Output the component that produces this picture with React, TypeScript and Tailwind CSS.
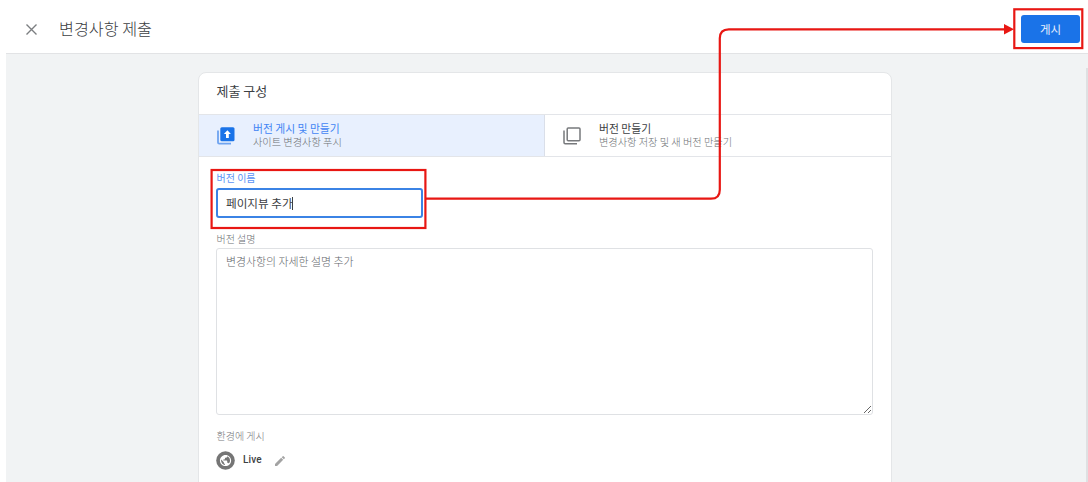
import { useState } from 'react';

const tabs = [
    {
        id: 'publish',
        title: '버전 게시 및 만들기',
        description: '사이트 변경사항 푸시',
    },
    {
        id: 'version',
        title: '버전 만들기',
        description: '변경사항 저장 및 새 버전 만들기',
    },
];

function CloseIcon() {
    return (
        <svg
            width="11"
            height="11"
            viewBox="0 0 11 11"
            fill="none"
            stroke="#7b7e81"
            strokeWidth="1.4"
        >
            <path d="M0.5 0.5l10 10M10.5 0.5L0.5 10.5" />
        </svg>
    );
}

function PublishIcon() {
    return (
        <svg width="18" height="18" viewBox="0 0 18 18">
            <path
                d="M1 3.5v12a1.2 1.2 0 0 0 1.2 1.2H14"
                fill="none"
                stroke="#6ea3f0"
                strokeWidth="1.8"
            />
            <rect x="3.3" y="0.3" width="14.2" height="14" rx="1.5" fill="#1a73e8" />
            <path d="M10.4 3.2L6.9 7.1h2.1v3.8h2.8V7.1h2.1z" fill="#fff" />
        </svg>
    );
}

function VersionIcon() {
    return (
        <svg
            width="18"
            height="18"
            viewBox="0 0 18 18"
            fill="none"
            stroke="#77797c"
            strokeWidth="1.5"
        >
            <path d="M1 3.5v12a1.2 1.2 0 0 0 1.2 1.2H14" />
            <rect x="4.2" y="1" width="12.8" height="12.8" rx="1" />
        </svg>
    );
}

function GlobeIcon() {
    return (
        <svg width="19" height="19" viewBox="0 0 19 19">
            <circle cx="9.5" cy="9.5" r="9.3" fill="#757575" />
            <g transform="translate(2.8 2.8) scale(0.56)">
                <path
                    fill="#fff"
                    d="M12 2C6.48 2 2 6.48 2 12s4.48 10 10 10 10-4.48 10-10S17.52 2 12 2zm-1 17.93c-3.95-.49-7-3.85-7-7.93 0-.62.08-1.21.21-1.79L9 15v1c0 1.1.9 2 2 2v1.93zm6.9-2.54c-.26-.81-1-1.39-1.9-1.39h-1v-3c0-.55-.45-1-1-1H8v-2h2c.55 0 1-.45 1-1V7h2c1.1 0 2-.9 2-2v-.41c2.93 1.19 5 4.06 5 7.41 0 2.08-.8 3.97-2.1 5.39z"
                />
            </g>
        </svg>
    );
}

function PencilIcon() {
    return (
        <svg width="10" height="10" viewBox="3 3 18 18" fill="#a3a3a3">
            <path d="M3 17.25V21h3.75L17.81 9.94l-3.75-3.75L3 17.25zM20.71 7.04a1 1 0 0 0 0-1.41l-2.34-2.34a1 1 0 0 0-1.41 0l-1.83 1.83 3.75 3.75 1.83-1.83z" />
        </svg>
    );
}

// Red guide: from the version name field to the publish button
function Guide() {
    return (
        <svg
            className="pointer-events-none absolute inset-0"
            width="1088"
            height="482"
            fill="none"
            stroke="#e81713"
            strokeWidth="2.2"
        >
            <rect x="211.6" y="170" width="213.8" height="58" />
            <rect x="1014.3" y="9.3" width="68" height="38.8" />
            <path d="M426 198.7H711q8.8 0 8.8-9V38.3q0-9 9-9H1005" />
            <path d="M1004 24l10 5.3-10 5.3z" fill="#e81713" stroke="none" />
        </svg>
    );
}

export default function App() {
    const [selected, setSelected] = useState('publish');
    const [name, setName] = useState('페이지뷰 추가');

    return (
        <div className="relative h-[482px] w-[1088px] overflow-hidden bg-white font-['Noto_Sans_CJK_KR',sans-serif] text-[#3c4043]">
            <header className="flex h-[53px] items-center pr-2 pl-[26px]">
                <button className="mt-1.5">
                    <CloseIcon />
                </button>
                <h1 className="mt-0.5 ml-[22px] text-[16.2px] leading-6 font-light">
                    변경사항 제출
                </h1>
                <button className="mt-1 ml-auto h-7 w-[59px] rounded-[3px] bg-[#1a73e8] text-[11.5px] leading-[26px] text-[#e8f0fe]">
                    게시
                </button>
            </header>

            <main className="ml-1.5 flex h-[429px] border-t border-[#e2e3e5] bg-[#f1f3f4]">
                <section className="mt-[18px] ml-48 h-[430px] w-[694px] rounded-t-lg border border-[#e4e6e8] bg-white">
                    <h2 className="h-[41px] pl-[17.5px] text-[13px] leading-9">
                        제출 구성
                    </h2>

                    <div className="grid h-[43px] grid-cols-2 border-y border-[#e3e5e9]">
                        {tabs.map((tab) => (
                            <button
                                key={tab.id}
                                onClick={() => setSelected(tab.id)}
                                className={
                                    selected === tab.id
                                        ? 'flex items-center border-r border-[#dadfe9] bg-[#e8f0fe] pl-[18px] text-left text-[#4285f4]'
                                        : 'flex items-center pl-[18px] text-left'
                                }
                            >
                                {tab.id === 'publish' ? (
                                    <PublishIcon />
                                ) : (
                                    <VersionIcon />
                                )}
                                <span className="mb-[3px] ml-[18px] flex flex-col">
                                    <span className="text-[10.8px] leading-[14px]">
                                        {tab.title}
                                    </span>
                                    <span className="text-[10.2px] leading-[13px] font-light text-[#6d7074]">
                                        {tab.description}
                                    </span>
                                </span>
                            </button>
                        ))}
                    </div>

                    <div className="flex flex-col items-start px-[17.5px]">
                        <label className="mt-[13px] text-[10px] leading-4 text-[#5b93f5]">
                            버전 이름
                        </label>
                        <div className="mt-[2px] -ml-[0.5px] flex h-[30px] w-[207px] items-center rounded-[3px] border-2 border-[#3b83e5] pl-2">
                            <input
                                value={name}
                                onChange={(e) => setName(e.target.value)}
                                className="w-[66px] text-[11.6px] leading-5 outline-none"
                            />
                            <span className="h-[13px] w-px bg-[#3c4043]" />
                        </div>

                        <label className="mt-[13px] text-[10px] leading-4 font-light text-[#6d7074]">
                            버전 설명
                        </label>
                        <textarea
                            placeholder="변경사항의 자세한 설명 추가"
                            className="mt-px -ml-[0.5px] h-[167px] w-[657px] resize rounded-[3px] border border-[#dfe1e4] px-[9px] py-1 text-[10.9px] leading-4 font-light outline-none placeholder:text-[#63666a]"
                        />

                        <span className="mt-[13px] text-[10px] leading-4 font-light text-[#77797c]">
                            환경에 게시
                        </span>
                        <div className="mt-[7px] -ml-[0.5px] flex items-center">
                            <GlobeIcon />
                            <span className="mr-[13px] mb-[2px] ml-2 font-[Roboto] text-[10px] leading-4 font-medium tracking-[0.1px]">
                                Live
                            </span>
                            <PencilIcon />
                        </div>
                    </div>
                </section>
                <div className="mt-3.5 ml-auto w-0.5 bg-[#dfe0e2]" />
            </main>

            <Guide />
        </div>
    );
}
